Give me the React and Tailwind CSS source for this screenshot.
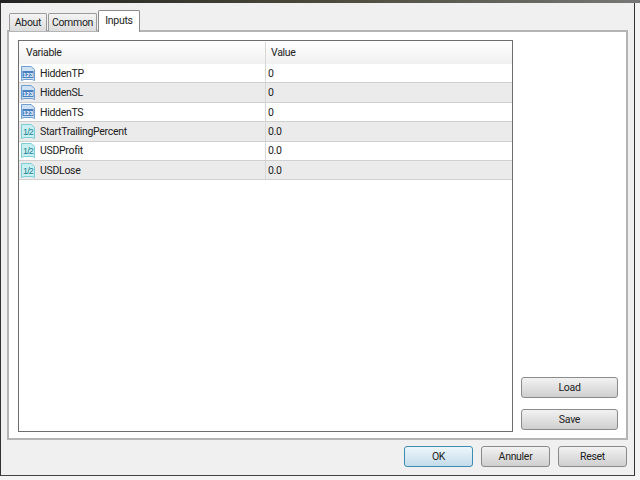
const rows = [
  { name: "HiddenTP", value: "0", type: "int" },
  { name: "HiddenSL", value: "0", type: "int" },
  { name: "HiddenTS", value: "0", type: "int" },
  { name: "StartTrailingPercent", value: "0.0", type: "dbl" },
  { name: "USDProfit", value: "0.0", type: "dbl" },
  { name: "USDLose", value: "0.0", type: "dbl" },
];

function TypeIcon({ type }) {
  const isInt = type === "int";
  return (
    <svg width="16" height="17" viewBox="0 0 16 17" className="shrink-0">
      <path
        d="M1.5 1.5 H11 L14.5 4.5 V15.5 L12 14.5 H4 L1.5 15.5 Z"
        fill={isInt ? "#cfe2f4" : "#c8f0f2"}
        stroke={isInt ? "#6f9fd0" : "#7ccdd4"}
      />
      {isInt ? <rect x="2.5" y="6" width="11" height="7" fill="#4a7fc0" /> : null}
      <text
        x="8"
        y={isInt ? 12 : 11.5}
        textAnchor="middle"
        fontFamily="Liberation Sans, sans-serif"
        fontWeight={isInt ? 700 : 400}
        fontSize={isInt ? 6 : 9}
        letterSpacing={isInt ? 0 : -0.9}
        fill={isInt ? "#ffffff" : "#1f7f90"}
      >
        {isInt ? "123" : "1/2"}
      </text>
    </svg>
  );
}

function Tab({ label, active, className }) {
  if (active) {
    return (
      <div className={`relative z-10 flex h-[22px] items-start justify-center rounded-t-[2px] border border-b-0 border-[#8c8c8c] bg-white pt-[2px] ${className}`}>
        {label}
      </div>
    );
  }
  return (
    <div className={`mt-[3px] flex h-[18px] items-center justify-center rounded-t-[2px] border border-b-0 border-[#9a9a9a] bg-gradient-to-b from-[#f4f4f4] to-[#dcdcdc] ${className}`}>
      {label}
    </div>
  );
}

function Button({ label, primary, className }) {
  return (
    <button
      className={`flex h-[21px] items-center justify-center rounded-[3px] border bg-gradient-to-b pt-px text-[#222] ${
        primary
          ? "border-[#3c8cb4] from-[#eef6fb] to-[#c4dcea]"
          : "border-[#8a8a8a] from-[#f2f2f2] to-[#cfcfcf]"
      } ${className}`}
    >
      {label}
    </button>
  );
}

export default function App() {
  return (
    <div className="h-[480px] w-[640px] overflow-hidden bg-[#f4f4f4] font-['Roboto',sans-serif] text-[10.5px] tracking-[-0.3px] text-[#222]">
      <div className="h-[3px] w-full bg-gradient-to-r from-[#222] via-[#4a4a3a] to-[#777]" />
      <div className="h-[473px] w-[635px] border-x border-b border-x-[#333] border-b-[#444] bg-[#f0f0f0] pt-[7px] pl-[6px]">
        <div className="flex h-[21px] items-start gap-px pl-[2px]">
          <Tab label="About" className="w-[38px]" />
          <Tab label="Common" className="w-[49px]" />
          <Tab label="Inputs" active className="w-[42px]" />
        </div>
        <div className="-mt-px flex h-[410px] w-[621px] gap-[8px] border-2 border-[#b4b4b4] bg-white pt-[8px] pr-[8px] pl-[9px]">
          <div className="h-[392px] w-[495px] border border-[#6e6e6e]">
            <div className="flex h-[23px] items-center bg-gradient-to-b from-white to-[#f0f0f0] pt-px">
              <div className="w-[247px] border-r border-[#d8d8d8] pl-[7px] leading-[22px]">Variable</div>
              <div className="pl-[5px]">Value</div>
            </div>
            {rows.map((row, i) => (
              <div
                key={row.name}
                className={`flex h-[19.4px] items-center border-b border-[#d0d0d0] ${i % 2 ? "bg-[#ebebeb]" : "bg-white"}`}
              >
                <div className="flex h-full w-[247px] items-center gap-[4px] border-r border-[#d8d8d8] pl-px">
                  <TypeIcon type={row.type} />
                  <span className="pt-px">{row.name}</span>
                </div>
                <div className="pt-px pl-[2px]">{row.value}</div>
              </div>
            ))}
          </div>
          <div className="flex h-[392px] w-[97px] flex-col justify-end gap-[11px] pb-[2px]">
            <Button label="Load" className="w-full" />
            <Button label="Save" className="w-full" />
          </div>
        </div>
        <div className="flex justify-end gap-[8px] pt-[6px] pr-[7px]">
          <Button label="OK" primary className="w-[69px]" />
          <Button label="Annuler" className="w-[69px]" />
          <Button label="Reset" className="w-[69px]" />
        </div>
      </div>
    </div>
  );
}
